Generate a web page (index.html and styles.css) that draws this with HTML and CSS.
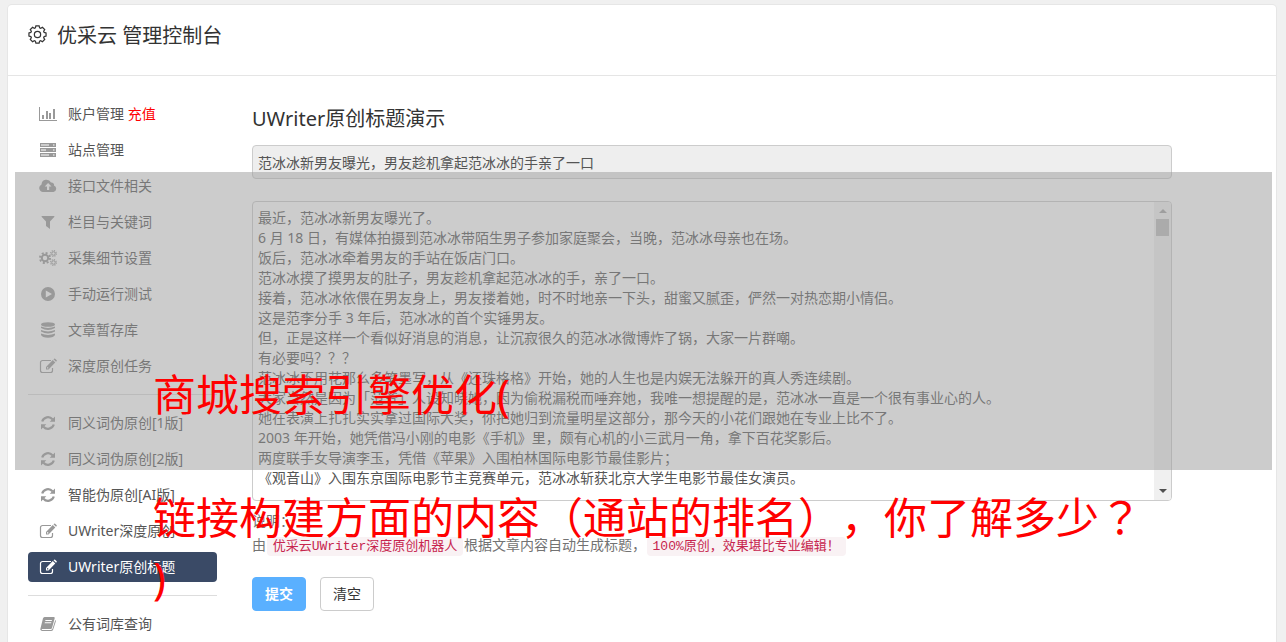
FILE: index.html
```
<!DOCTYPE html>
<html lang="zh-CN">
<head>
    <meta charset="UTF-8">
    <meta name="viewport" content="width=device-width, initial-scale=1.0">
    <title>优采云 管理控制台</title>
    <link rel="stylesheet" href="styles.css">
</head>
<body>
    <div class="panel">
        <header class="panel-header">
            <svg class="gear" viewBox="0 0 20 20"><path d="M8.3 1h3.400l.5 2 1.200.5L15.200 2.400l2.400 2.400-1.100 1.800.5 1.200 2 .5v3.400l-2 .5-.5 1.200 1.100 1.800-2.400 2.400-1.800-1.100-1.200.5-.5 2H8.300l-.5-2-1.200-.5-1.800 1.100-2.400-2.400 1.100-1.800-.5-1.200-2-.5V8.300l2-.5.5-1.200-1.100-1.800 2.400-2.400 1.800 1.100 1.200-.5z"/><circle cx="10" cy="10" r="3.300"/></svg>
            <h1>优采云 管理控制台</h1>
        </header>
        <div class="panel-body">
            <nav class="sidebar">
                <a href="#"><svg viewBox="0 0 18 16"><path d="M0 1h1v13h17v1H0zM3 9h2v4H3zM7 5h2v8H7zM10 7h2v6h-2zM14 3h2v10h-2z"/></svg>账户管理 <span class="recharge">充值</span></a>
                <a href="#"><svg viewBox="0 0 18 16"><path fill-rule="evenodd" d="M1 1h16v4H1zM2 2.500v1h8v-1zM14 2.500v1h1.500v-1zM1 6h16v4H1zM2 7.500v1h5v-1zM14 7.500v1h1.500v-1zM1 11h16v4H1zM2 12.500v1h8v-1zM14 12.500v1h1.500v-1z"/></svg>站点管理</a>
                <a href="#"><svg viewBox="0 0 18 16"><path fill-rule="evenodd" d="M4 14a4 4 0 0 1-1.500-7.600A5 5 0 0 1 12 4.500a2.500 2.500 0 0 1 3 3A3.400 3.400 0 0 1 14.500 14zM8 12h2.200V8.500h2.300L9.100 5 5.700 8.500H8z"/></svg>接口文件相关</a>
                <a href="#"><svg viewBox="0 0 18 16"><path d="M2.500 2h13l-.3 1L11 7.500V15l-4-3V7.500L2.800 3z"/></svg>栏目与关键词</a>
                <a href="#"><svg class="cogs" viewBox="0 0 18 16"><circle cx="6" cy="8" r="3.200" stroke-width="2"/><circle cx="6" cy="8" r="5" stroke-width="2" stroke-dasharray="2 1.930"/><circle cx="14.500" cy="3.500" r="1.700"/><circle cx="14.500" cy="3.500" r="2.800" stroke-width="1.200" stroke-dasharray="1.200 1"/><circle cx="14.500" cy="12.500" r="1.700"/><circle cx="14.500" cy="12.500" r="2.800" stroke-width="1.200" stroke-dasharray="1.200 1"/></svg>采集细节设置</a>
                <a href="#"><svg viewBox="0 0 18 16"><path fill-rule="evenodd" d="M9 1a7 7 0 1 0 0 14A7 7 0 0 0 9 1zM6.800 4.500 13 8l-6.200 3.500z"/></svg>手动运行测试</a>
                <a href="#"><svg viewBox="0 0 18 16"><ellipse cx="9" cy="2.500" rx="7" ry="2.300"/><path d="M2 4.500q7 2.800 14 0V6q-7 4-14 0zM2 8q7 2.800 14 0v1.500q-7 4-14 0zM2 11.500q7 2.800 14 0V13q-1 2.500-7 2.700Q3 15.500 2 13z"/></svg>文章暂存库</a>
                <a href="#"><svg viewBox="0 0 18 16"><use href="#edit"/></svg>深度原创任务</a>
                <hr>
                <a href="#"><svg viewBox="0 0 18 16"><use href="#refresh"/></svg>同义词伪原创[1版]</a>
                <a href="#"><svg viewBox="0 0 18 16"><use href="#refresh"/></svg>同义词伪原创[2版]</a>
                <a href="#"><svg viewBox="0 0 18 16"><use href="#refresh"/></svg>智能伪原创[AI版]</a>
                <a href="#"><svg viewBox="0 0 18 16"><use href="#edit"/></svg>UWriter深度原创</a>
                <a href="#" class="active"><svg viewBox="0 0 18 16"><use href="#edit"/></svg>UWriter原创标题</a>
                <hr>
                <a href="#"><svg viewBox="0 0 18 16"><path fill-rule="evenodd" d="M5.500 1H15q1 .2.700 1.300L13 12q-.3 1-1.300 1H3.200q-.8.2-.3.900h9q1.300 0 1.700-1.300L16.300 4q.8.400.5 1.500L14.200 13.500Q13.700 15 12 15H3q-2.300-.5-1.500-2.700L4 2.300Q4.400 1.200 5.500 1zM6.500 4l-.3 1h6.500l.3-1zM5.900 6.200l-.3 1h6.500l.3-1z"/></svg>公有词库查询</a>
            </nav>
            <main class="content">
                <h2><label for="title">UWriter原创标题演示</label></h2>
                <input id="title" class="field" type="text" readonly value="范冰冰新男友曝光，男友趁机拿起范冰冰的手亲了一口">
                <div class="article">
                    <textarea class="field" aria-label="文章内容">最近，范冰冰新男友曝光了。
6 月 18 日，有媒体拍摄到范冰冰带陌生男子参加家庭聚会，当晚，范冰冰母亲也在场。
饭后，范冰冰牵着男友的手站在饭店门口。
范冰冰摸了摸男友的肚子，男友趁机拿起范冰冰的手，亲了一口。
接着，范冰冰依偎在男友身上，男友搂着她，时不时地亲一下头，甜蜜又腻歪，俨然一对热恋期小情侣。
这是范李分手 3 年后，范冰冰的首个实锤男友。
但，正是这样一个看似好消息的消息，让沉寂很久的范冰冰微博炸了锅，大家一片群嘲。
有必要吗？？？
范冰冰不用花那么多笔墨写，从《还珠格格》开始，她的人生也是内娱无法躲开的真人秀连续剧。
大家当然是因为「范爷」人设知晓她，因为偷税漏税而唾弃她，我唯一想提醒的是，范冰冰一直是一个很有事业心的人。
她在表演上扎扎实实拿过国际大奖，你把她归到流量明星这部分，那今天的小花们跟她在专业上比不了。
2003 年开始，她凭借冯小刚的电影《手机》里，颇有心机的小三武月一角，拿下百花奖影后。
两度联手女导演李玉，凭借《苹果》入围柏林国际电影节最佳影片；
《观音山》入围东京国际电影节主竞赛单元，范冰冰斩获北京大学生电影节最佳女演员。</textarea>
                    <div class="scrollbar">
                        <i class="arrow up"></i>
                        <i class="thumb"></i>
                        <i class="arrow down"></i>
                    </div>
                </div>
                <p class="help">说明：<br>由 <code>优采云UWriter深度原创机器人</code> 根据文章内容自动生成标题， <code>100%原创，效果堪比专业编辑！</code></p>
                <div class="buttons">
                    <button class="btn primary" type="submit">提交</button>
                    <button class="btn" type="reset">清空</button>
                </div>
            </main>
        </div>
    </div>

    <div class="banner">
        <p>商城搜索引擎优化(<br><br>链接构建方面的内容<span class="mark" lang="zh-TW">（</span>通站的排名<span class="mark" lang="zh-TW">）</span>，你了解多少<span class="mark" lang="zh-TW">？</span><br>)</p>
    </div>

    <svg class="symbols">
        <symbol id="edit" viewBox="0 0 18 16"><path d="M12 2.500H3.500a2 2 0 0 0-2 2v8a2 2 0 0 0 2 2h8a2 2 0 0 0 2-2V10" fill="none" stroke="currentColor" stroke-width="1.200"/><path fill-rule="evenodd" d="M13.800 2 16.300 4.500 9.500 11.500H7V9zM8 9.500v1h1l.6-.6-1-1z"/><path d="m14.500 1.300.6-.5q.7-.5 1.300.1l1.100 1.100q.6.600 0 1.300l-.5.500z"/></symbol>
        <symbol id="refresh" viewBox="0 0 18 16"><path d="M3.200 6.500a6 6 0 0 1 10.300-2.200M14.800 9.500a6 6 0 0 1-10.300 2.200" fill="none" stroke="currentColor" stroke-width="2.200"/><path d="M16 1.500v5.300h-5.300zM2 14.500V9.200h5.300z"/></symbol>
    </svg>
</body>
</html>
```
FILE: styles.css
```
* {
    box-sizing: border-box;
}
body {
    position: relative;
    margin: 0;
    padding: 5px 10px 0 8px;
    background: #f0f0f0;
    color: #555;
    font: 14px/20px "Noto Sans", "Noto Sans CJK SC", sans-serif;
    text-spacing-trim: space-all;
}
.panel {
    min-height: calc(100vh - 5px);
    background: #fff;
    border-radius: 4px 4px 0 0;
    box-shadow: 0 0 0 1px #e6e6e6;
}
.panel-header {
    display: flex;
    align-items: center;
    gap: 10px;
    height: 71px;
    padding: 0 20px 8px;
    border-bottom: 1px solid #e5e5e5;
}
.gear {
    width: 19px;
    height: 19px;
    margin-bottom: 3px;
    fill: none;
    stroke: #333;
    stroke-width: 1.3;
}
h1, h2 {
    margin: 0;
    color: #333;
    font-size: 20px;
    line-height: 28px;
    font-weight: 400;
}
.panel-body {
    display: flex;
    gap: 35px;
    padding: 23px 20px 0;
}

/* Left menu */
.sidebar {
    display: flex;
    flex-direction: column;
    flex: 0 0 189px;
    gap: 6px;
}
.sidebar a {
    display: flex;
    align-items: center;
    height: 30px;
    padding-left: 11px;
    border-radius: 4px;
    color: #555;
    text-decoration: none;
    white-space: pre;
}
.sidebar svg {
    width: 18px;
    height: 16px;
    margin-right: 11px;
    fill: currentColor;
    color: #999;
}
.sidebar .cogs {
    fill: none;
    stroke: currentColor;
}
.sidebar .recharge {
    color: #f00;
}
.sidebar .active,
.sidebar .active svg {
    background: #3a4a66;
    color: #fff;
}
.sidebar hr {
    width: 100%;
    margin: 7px 0;
    border: 0;
    border-top: 1px solid #ddd;
}

/* Form */
.content {
    flex: 1;
    max-width: 920px;
    padding-top: 6px;
}
.field {
    display: block;
    width: 100%;
    padding: 6px 5px;
    border: 1px solid #ccc;
    border-radius: 4px;
    background: #fff;
    color: #555;
    font: inherit;
}
input.field {
    height: 34px;
    margin: 12px 0 22px;
    background: #eee;
}
.article {
    position: relative;
}
textarea.field {
    height: 300px;
    padding-right: 23px;
    resize: none;
    scrollbar-width: none;
}
.scrollbar {
    position: absolute;
    top: 1px;
    right: 1px;
    bottom: 1px;
    display: flex;
    flex-direction: column;
    align-items: center;
    width: 17px;
    background: #f0f0f0;
    border-radius: 0 3px 3px 0;
}
.thumb {
    width: 13px;
    height: 17px;
    background: #bcbcbc;
}
.arrow {
    margin: 7px 0 6px;
    border: 4px solid transparent;
    border-top: 0;
    border-bottom-color: #a3a3a3;
}
.arrow.down {
    margin: auto 0 7px;
    border-top: 4px solid #505050;
    border-bottom: 0;
}
.help {
    margin: 8px 0 20px;
    line-height: 24px;
    color: #737373;
}
code {
    padding: 2px 6px;
    border-radius: 4px;
    background: #f9f2f4;
    color: #c7254e;
    font: 13px/15px "Liberation Mono", "Noto Sans CJK SC", monospace;
}
.help code {
    margin: 0 -3px;
}
.buttons {
    display: flex;
    gap: 14px;
}
.btn {
    width: 54px;
    height: 34px;
    padding: 0;
    border: 1px solid #ccc;
    border-radius: 4px;
    background: #fff;
    color: #333;
    font: inherit;
}
.primary {
    border-color: #5ab0ff;
    background: #5ab0ff;
    color: #fff;
    font-weight: bold;
}

/* Headline over the page */
.banner {
    position: absolute;
    top: 172px;
    left: 15px;
    right: 14px;
    height: 298px;
    padding: 193px 0 0 138px;
    background: rgba(153, 153, 153, 0.5);
}
.banner p {
    margin: 0;
    color: #f00;
    font-size: 43px;
    line-height: 60px;
    white-space: nowrap;
}
.mark {
    font-family: "Noto Sans CJK TC", sans-serif;
}
.symbols {
    position: absolute;
    width: 0;
    height: 0;
}
```
